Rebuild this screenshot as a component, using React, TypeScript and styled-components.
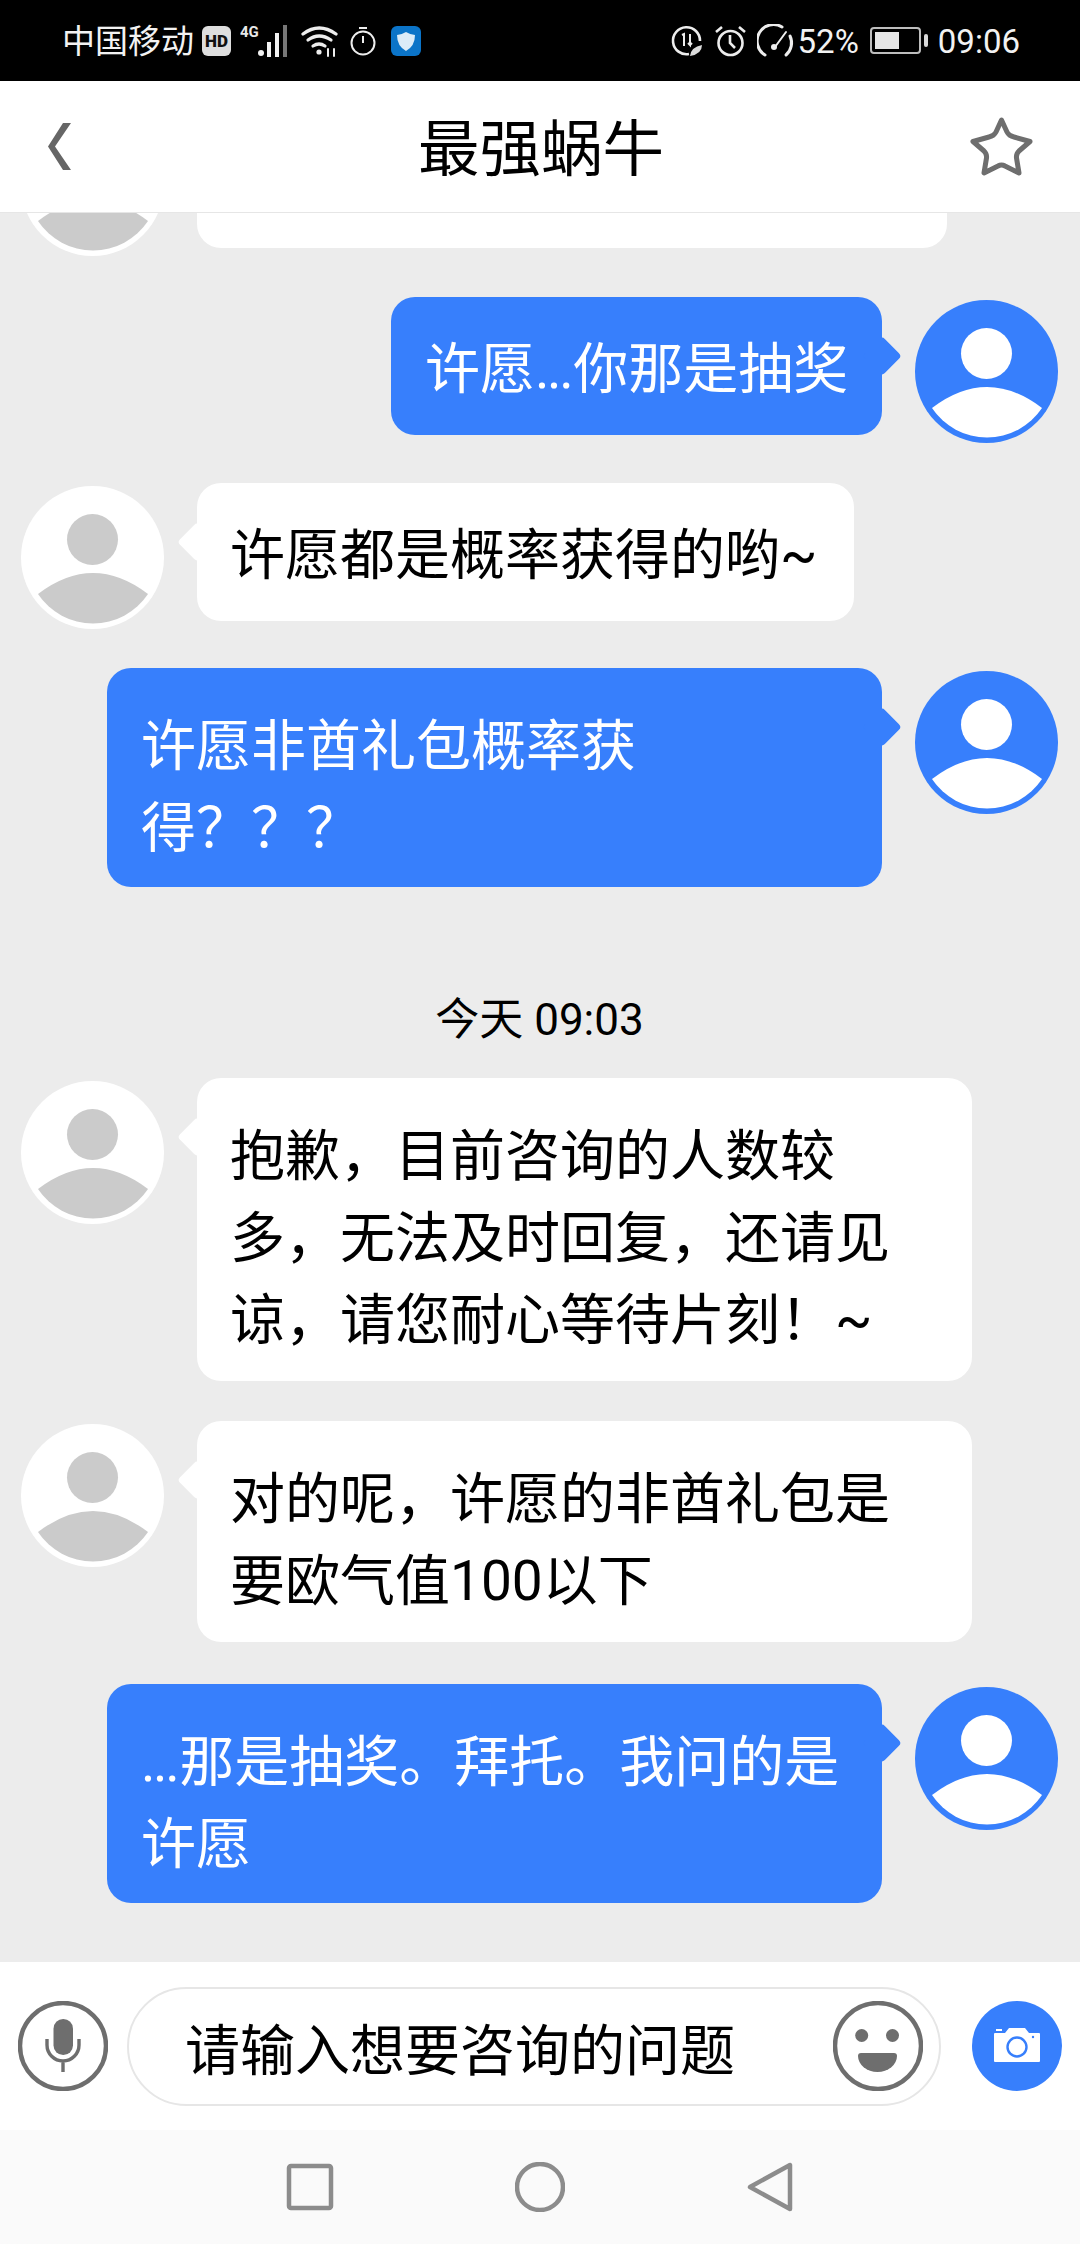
import React from "react";
import styled, { createGlobalStyle } from "styled-components";

const BLUE = "#377ffc";
const FONT = `Roboto, "Noto Sans CJK SC", sans-serif`;

const GlobalStyle = createGlobalStyle`
    html, body {
        margin: 0;
        padding: 0;
        background: #000;
    }
    * {
        box-sizing: border-box;
    }
`;

const Screen = styled.div`
    width: 1080px;
    height: 2244px;
    display: flex;
    flex-direction: column;
    font-family: ${FONT};
    background: #ececec;
`;

/* status bar */
const StatusBar = styled.div`
    height: 81px;
    flex: none;
    display: flex;
    align-items: center;
    justify-content: space-between;
    padding: 0 60px 0 62px;
    background: #000;
    color: #f2f2f2;
`;

const StatusGroup = styled.div`
    display: flex;
    align-items: center;
`;

const StatusText = styled.span<{ $left?: number }>`
    padding-top: 2px;
    font-size: 33px;
    line-height: 40px;
    margin-left: ${(p) => p.$left ?? 0}px;
`;

const StatusIcon = styled.svg<{ $left: number }>`
    display: block;
    flex: none;
    margin-left: ${(p) => p.$left}px;
`;

const HdBadge = styled.span`
    width: 29px;
    height: 30px;
    margin-left: 8px;
    border-radius: 6px;
    background: #dedede;
    color: #111;
    font-size: 17px;
    font-weight: 900;
    line-height: 30px;
    text-align: center;
`;

const Battery = styled.div`
    width: 51px;
    height: 27px;
    margin-left: 11px;
    padding: 3px;
    border: 2px solid #bdbdbd;
    border-radius: 4px;
    position: relative;
    &::before {
        content: "";
        display: block;
        width: 60%;
        height: 100%;
        background: #e6e6e6;
    }
    &::after {
        content: "";
        position: absolute;
        right: -9px;
        top: 5px;
        width: 4px;
        height: 13px;
        border-radius: 2px;
        background: #d8d8d8;
    }
`;

/* header */
const Header = styled.header`
    height: 132px;
    flex: none;
    display: grid;
    grid-template-columns: 1fr auto 1fr;
    align-items: center;
    padding: 0 46px 0 48px;
    background: #fff;
    border-bottom: 1px solid #e6e6e6;
`;

const Title = styled.h1`
    margin: 0;
    padding-top: 6px;
    color: #000;
    font-size: 61.5px;
    font-weight: 400;
    line-height: 80px;
`;

const BackIcon = styled.svg`
    display: block;
    justify-self: start;
`;

const StarIcon = styled.svg`
    display: block;
    justify-self: end;
`;

/* chat */
const Chat = styled.main`
    flex: 1;
    min-height: 0;
    overflow: hidden;
    display: flex;
    flex-direction: column;
    justify-content: flex-end;
    padding: 0 22px 59px 21px;
    background: #ececec;
`;

const Row = styled.div<{ $mine?: boolean; $gap?: number }>`
    flex: none;
    display: flex;
    align-items: flex-start;
    justify-content: ${(p) => (p.$mine ? "flex-end" : "flex-start")};
    gap: 33px;
    margin-top: ${(p) => p.$gap ?? 0}px;
`;

const Bubble = styled.div<{ $mine?: boolean; $width?: number; $single?: boolean }>`
    position: relative;
    width: ${(p) => (p.$width ? `${p.$width}px` : "auto")};
    padding-top: ${(p) => (p.$single ? 31 : 37)}px;
    padding-right: 33px;
    padding-bottom: ${(p) => (p.$single ? 25 : p.$mine ? 18 : 20)}px;
    padding-left: ${(p) => (p.$mine ? 34 : 33)}px;
    border-radius: 24px;
    background: ${(p) => (p.$mine ? BLUE : "#fff")};
    color: ${(p) => (p.$mine ? "#fff" : "#000")};
    font-size: 55px;
    line-height: 82px;
    white-space: nowrap;
    &::after {
        content: "";
        position: absolute;
        top: 45px;
        ${(p) => (p.$mine ? "right: -14px;" : "left: -14px;")}
        width: 28px;
        height: 28px;
        border-radius: 4px;
        background: inherit;
        transform: rotate(45deg);
    }
`;

const Dots = styled.span`
    letter-spacing: -2.4px;
    margin-right: 2px;
`;

const TimeLabel = styled.div`
    flex: none;
    margin: 103px 0 28px;
    color: #000;
    font-size: 44px;
    line-height: 60px;
    text-align: center;
`;

const AvatarIcon = styled.svg`
    display: block;
    flex: none;
    margin-top: 3px;
`;

const Avatar = ({ mine }: { mine?: boolean }) => (
    <AvatarIcon width="143" height="143" viewBox="0 0 143 143">
        <circle cx="71.5" cy="71.5" r="71.5" fill={mine ? BLUE : "#fff"} />
        <g fill={mine ? "#fff" : "#cbcbcb"}>
            <circle cx="71.5" cy="53.5" r="25.5" />
            <path d="M17 108Q72 66 127 108A66 66 0 0 1 17 108Z" />
        </g>
    </AvatarIcon>
);

/* input bar */
const InputBar = styled.div`
    height: 168px;
    flex: none;
    display: flex;
    align-items: center;
    padding: 0 18px;
    background: #fff;
`;

const RoundIcon = styled.svg`
    display: block;
    flex: none;
`;

const InputPill = styled.div`
    flex: 1;
    height: 119px;
    margin: 0 31px 0 19px;
    display: flex;
    align-items: center;
    justify-content: space-between;
    padding: 0 16px 0 56px;
    border: 2px solid #e6e6e6;
    border-radius: 60px;
    color: #000;
    font-size: 55px;
`;

/* nav bar */
const NavBar = styled.nav`
    height: 114px;
    flex: none;
    display: flex;
    align-items: center;
    justify-content: center;
    gap: 180px;
    background: #fafafa;
`;

const NavIcon = styled.svg`
    display: block;
`;

const App = () => (
    <Screen>
        <GlobalStyle />
        <StatusBar>
            <StatusGroup>
                <StatusText>中国移动</StatusText>
                <HdBadge>HD</HdBadge>
                <StatusIcon $left={9} width="52" height="34" viewBox="0 0 52 34">
                    <text x="0" y="13" fill="#e8e8e8" fontFamily="Roboto, sans-serif" fontSize="15" fontWeight="700">4G</text>
                    <circle cx="21" cy="29" r="3" fill="#f2f2f2" />
                    <rect x="27" y="18" width="4" height="15" fill="#f2f2f2" />
                    <rect x="35" y="9" width="4" height="24" fill="#f2f2f2" />
                    <rect x="43" y="1" width="4" height="32" fill="#777" />
                </StatusIcon>
                <StatusIcon $left={9} width="38" height="32" viewBox="0 0 38 32" fill="none" stroke="#ededed" strokeWidth="3.2" strokeLinecap="round">
                    <path d="M2 9Q18-3 35 9" />
                    <path d="M7 15Q18 7 30 15" />
                    <path d="M12 21Q18 17 24 21" />
                    <circle cx="18" cy="27" r="2.6" fill="#ededed" stroke="none" />
                    <path d="M27 24v7M33 24v7" strokeWidth="2" />
                </StatusIcon>
                <StatusIcon $left={11} width="26" height="30" viewBox="0 0 26 30" fill="none" stroke="#ededed" strokeWidth="2">
                    <circle cx="13" cy="17" r="11.5" />
                    <path d="M9 2h8M13 10v7" />
                </StatusIcon>
                <StatusIcon $left={15} width="30" height="30" viewBox="0 0 30 30">
                    <rect width="30" height="30" rx="6" fill="#0b74c8" />
                    <path d="M15 6Q20 9 24 9Q24 20 15 25Q6 20 6 9Q10 9 15 6Z" fill="#dcecf8" />
                </StatusIcon>
            </StatusGroup>
            <StatusGroup>
                <StatusIcon $left={0} width="32" height="32" viewBox="0 0 32 32" fill="none" stroke="#ededed" strokeWidth="2.6">
                    <path d="M18 29A13.5 13.5 0 1 1 29 16" />
                    <path d="M11 10l2-1v12M19 9v11l-2-2M19 20l2-2" strokeWidth="2" />
                    <path d="M19 31Q20 22 31 20Q31 29 19 31Z" fill="#dcdcdc" stroke="none" />
                </StatusIcon>
                <StatusIcon $left={12} width="31" height="32" viewBox="0 0 31 32" fill="none" stroke="#ededed" strokeWidth="2.6">
                    <circle cx="15.5" cy="18" r="12" />
                    <path d="M15 10v8l5 5M1 7l6-5M30 7l-6-5" />
                </StatusIcon>
                <StatusIcon $left={11} width="38" height="34" viewBox="0 0 38 34" fill="none" stroke="#ededed" strokeWidth="3" strokeLinecap="round">
                    <path d="M8 31A16 16 0 0 1 25 3" />
                    <path d="M33 12A16 16 0 0 1 29 31" />
                    <path d="M18 23L29 8" strokeWidth="2" />
                    <circle cx="17" cy="23" r="3" fill="#ededed" stroke="none" />
                </StatusIcon>
                <StatusText $left={3}>52%</StatusText>
                <Battery />
                <StatusText $left={17}>09:06</StatusText>
            </StatusGroup>
        </StatusBar>

        <Header>
            <BackIcon width="23" height="47" viewBox="0 0 23 47">
                <path d="M15 0H23L7 23.5L23 47H15L0 23.5Z" fill="#666" />
            </BackIcon>
            <Title>最强蜗牛</Title>
            <StarIcon width="65" height="62" viewBox="0 0 65 62">
                <path d="M32.5 4L38 16Q40 20 45 21L61 25.5L50 35Q47 38 47.5 42L50 57L36 50Q32.5 48 29 50L15 57L17.5 42Q18 38 15 35L4 25.5L20 21Q25 20 27 16Z" fill="none" stroke="#6e6e6e" strokeWidth="5" strokeLinejoin="round" />
            </StarIcon>
        </Header>

        <Chat>
            <Row>
                <Avatar />
                <Bubble $single $width={750}>&nbsp;</Bubble>
            </Row>
            <Row $mine $gap={41}>
                <Bubble $mine $single $width={491}>
                    许愿<Dots>...</Dots>你那是抽奖
                </Bubble>
                <Avatar mine />
            </Row>
            <Row $gap={40}>
                <Avatar />
                <Bubble $single $width={657}>许愿都是概率获得的哟~</Bubble>
            </Row>
            <Row $mine $gap={39}>
                <Bubble $mine $width={775}>
                    许愿非酋礼包概率获
                    <br />
                    得？？？
                </Bubble>
                <Avatar mine />
            </Row>
            <TimeLabel>今天 09:03</TimeLabel>
            <Row>
                <Avatar />
                <Bubble $width={775}>
                    抱歉，目前咨询的人数较
                    <br />
                    多，无法及时回复，还请见
                    <br />
                    谅，请您耐心等待片刻！~
                </Bubble>
            </Row>
            <Row $gap={40}>
                <Avatar />
                <Bubble $width={775}>
                    对的呢，许愿的非酋礼包是
                    <br />
                    要欧气值100以下
                </Bubble>
            </Row>
            <Row $mine $gap={42}>
                <Bubble $mine $width={775}>
                    <Dots>...</Dots>那是抽奖。拜托。我问的是
                    <br />
                    许愿
                </Bubble>
                <Avatar mine />
            </Row>
        </Chat>

        <InputBar>
            <RoundIcon width="90" height="90" viewBox="0 0 90 90">
                <circle cx="45" cy="45" r="43" fill="none" stroke="#6e6e6e" strokeWidth="4.5" />
                <rect x="35.5" y="18" width="19.5" height="36" rx="9.7" fill="#6e6e6e" />
                <path d="M29 38V44A16 16 0 0 0 61 44V38M45 60V71" fill="none" stroke="#6e6e6e" strokeWidth="3.4" />
            </RoundIcon>
            <InputPill>
                请输入想要咨询的问题
                <RoundIcon width="90" height="90" viewBox="0 0 90 90">
                    <circle cx="45" cy="45" r="43" fill="none" stroke="#6e6e6e" strokeWidth="4.5" />
                    <circle cx="28.7" cy="34.5" r="6.5" fill="#6e6e6e" />
                    <circle cx="59.5" cy="34.5" r="6.5" fill="#6e6e6e" />
                    <path d="M25 55Q25 52 28 52H61Q64 52 64 55A19.5 16 0 0 1 25 55Z" fill="#6e6e6e" />
                </RoundIcon>
            </InputPill>
            <RoundIcon width="90" height="90" viewBox="0 0 90 90">
                <circle cx="45" cy="45" r="45" fill={BLUE} />
                <path d="M22 33Q22 32 23 32H33L37 27H53L57 32H67Q68 32 68 33V60Q68 61 67 61H23Q22 61 22 60Z" fill="#fff" />
                <rect x="24" y="28" width="6" height="2" fill="#fff" />
                <circle cx="45" cy="46" r="9.5" fill="none" stroke={BLUE} strokeWidth="2.4" />
                <circle cx="61" cy="36" r="1.2" fill={BLUE} />
            </RoundIcon>
        </InputBar>

        <NavBar>
            <NavIcon width="50" height="50" viewBox="0 0 50 50">
                <rect x="4" y="4" width="42" height="42" rx="2" fill="none" stroke="#8c8c8c" strokeWidth="4.5" />
            </NavIcon>
            <NavIcon width="50" height="50" viewBox="0 0 50 50">
                <circle cx="25" cy="25" r="23" fill="none" stroke="#8c8c8c" strokeWidth="4.5" />
            </NavIcon>
            <NavIcon width="50" height="50" viewBox="0 0 50 50">
                <path d="M45 3V47L5 25Z" fill="none" stroke="#8c8c8c" strokeWidth="4.5" strokeLinejoin="round" />
            </NavIcon>
        </NavBar>
    </Screen>
);

export default App;
